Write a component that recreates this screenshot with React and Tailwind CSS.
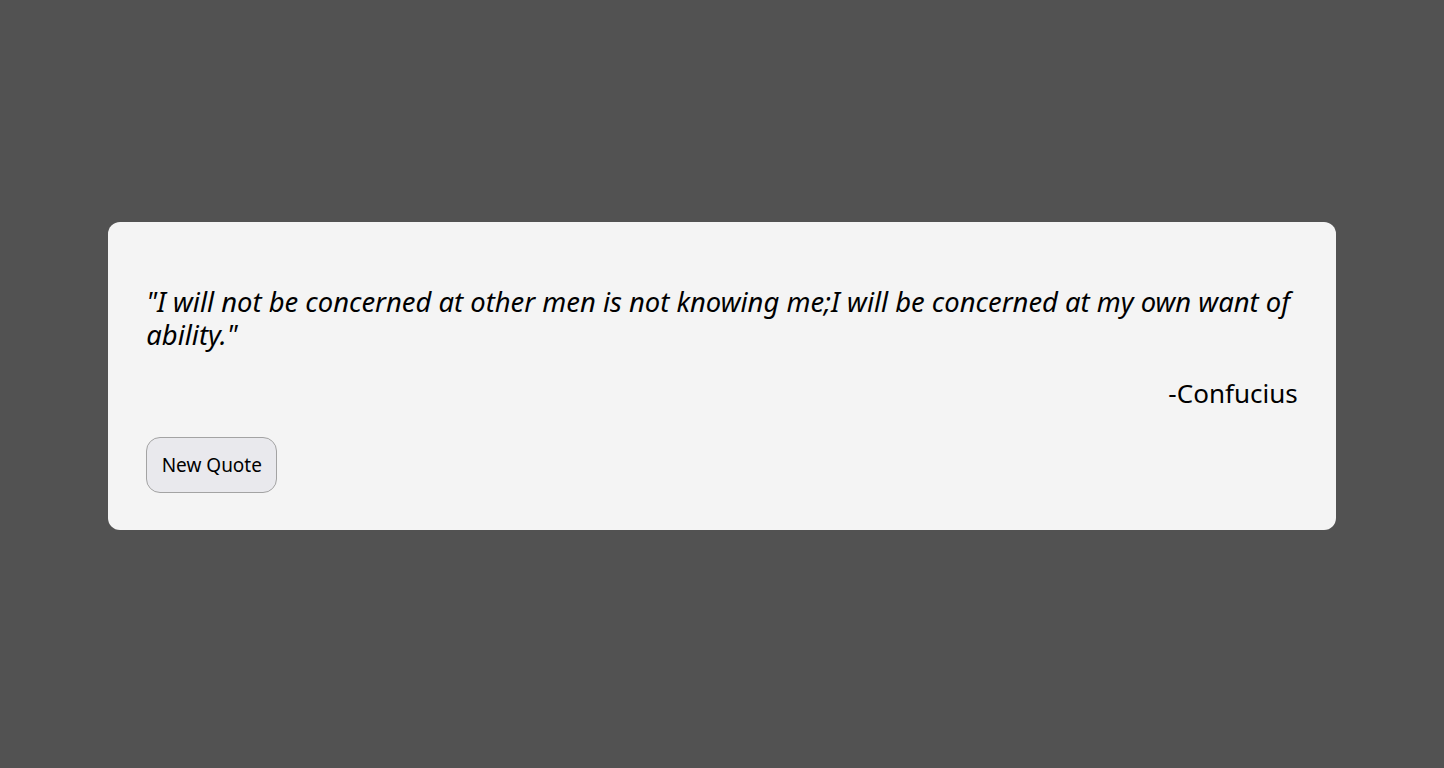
export default function App() {
  return (
    <div className="min-h-[768px] w-full bg-[#525252] pt-[222px]" style={{ fontFamily: '"Noto Sans", "Open Sans", sans-serif' }}>
      <div className="mx-auto w-[85%] rounded-[12px] bg-[#f4f4f4] px-[38px] pb-[37px] pt-[63px] text-black">
        <p className="text-[27.4px] italic leading-[33px]">
          "I will not be concerned at other men is not knowing me;I will be concerned at my own want of ability."
        </p>
        <p className="mt-[27px] text-right text-[26px] leading-[31px]">-Confucius</p>
        <button className="mt-[28px] h-[56px] w-[131px] rounded-[14px] border border-[#a3a3a3] bg-[#e9e9ed] text-[19px] text-black">
          New Quote
        </button>
      </div>
    </div>
  );
}
